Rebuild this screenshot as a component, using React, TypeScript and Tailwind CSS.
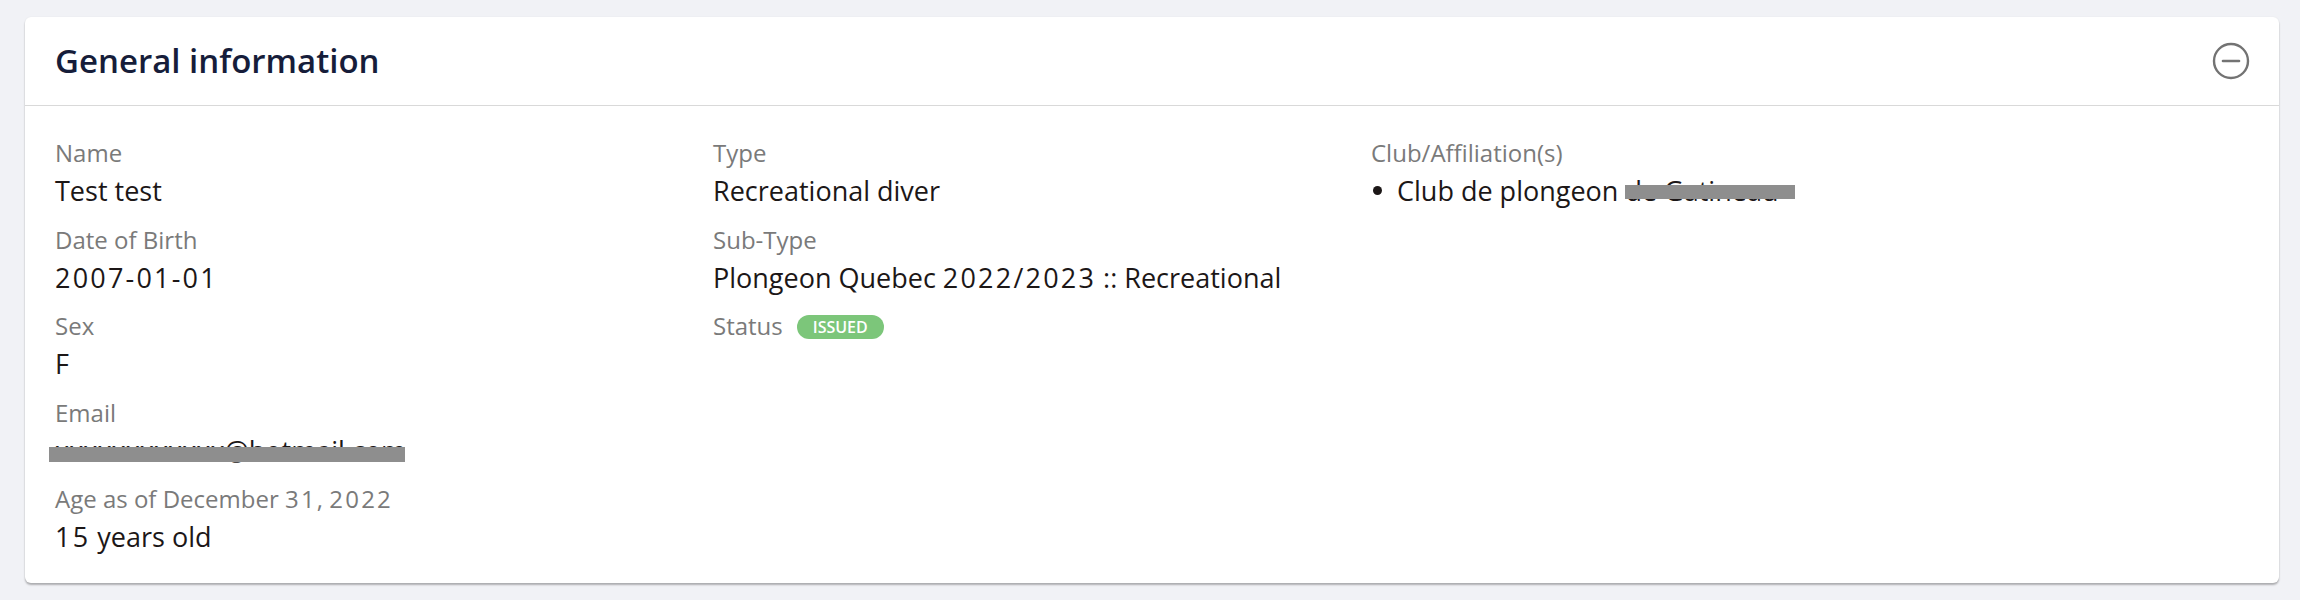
import React from "react";

const FONT = { fontFamily: '"Open Sans", "Noto Sans", sans-serif' };

function D({ children }: { children: React.ReactNode }) {
  return <span className="tracking-[2.2px]">{children}</span>;
}

function Label({ children }: { children: React.ReactNode }) {
  return <div className="text-[24px] leading-[34px] text-[#7a7a7a]">{children}</div>;
}

function Value({ children }: { children: React.ReactNode }) {
  return <div className="text-[27px] leading-[41px] text-[#1c1717]">{children}</div>;
}

function Field({ label, value }: { label: React.ReactNode; value: React.ReactNode }) {
  return (
    <div className="flex flex-col">
      <Label>{label}</Label>
      <Value>{value}</Value>
    </div>
  );
}

export default function App() {
  return (
    <div className="min-h-[600px] w-[2300px] bg-[#f1f2f6] pt-[17px] pl-[25px]" style={FONT}>
      <div className="w-[2254px] rounded-[6px] bg-white shadow-[0_2px_2px_rgba(0,0,0,0.28),0_0_2px_rgba(0,0,0,0.06)]">
        <div className="flex h-[89px] items-center justify-between border-b border-[#d9d9d9] px-[30px]">
          <h2 className="mt-[-2px] text-[33px] font-semibold leading-none text-[#161d3a]">General information</h2>
          <svg width="38" height="38" viewBox="0 0 38 38" fill="none" className="mr-[-1px]">
            <circle cx="19" cy="19" r="17" stroke="#737373" strokeWidth="2.4" />
            <line x1="11" y1="19" x2="27" y2="19" stroke="#737373" strokeWidth="2.6" strokeLinecap="round" />
          </svg>
        </div>
        <div className="grid grid-cols-[658px_658px_1fr] px-[30px] pt-[30px] pb-[26px]">
          <div className="flex flex-col gap-[11.6px]">
            <Field label="Name" value="Test test" />
            <Field label="Date of Birth" value={<D>2007-01-01</D>} />
            <Field label="Sex" value="F" />
            <Field
              label="Email"
              value={
                <span className="relative inline-block">
                  xxxxxxxxxxxx@hotmail.com
                  <span className="absolute left-[-6px] top-[17px] h-[15px] w-[356px] bg-[#8e8e8e]" />
                </span>
              }
            />
            <Field
              label={
                <>
                  Age as of December <D>31</D>, <D>2022</D>
                </>
              }
              value={
                <>
                  <D>15</D> years old
                </>
              }
            />
          </div>
          <div className="flex flex-col gap-[11.6px]">
            <Field label="Type" value="Recreational diver" />
            <Field
              label="Sub-Type"
              value={
                <>
                  Plongeon Quebec <D>2022/2023</D> :: Recreational
                </>
              }
            />
            <div className="flex items-center">
              <Label>Status</Label>
              <span className="ml-[14px] mt-[1px] flex h-[24px] w-[87px] items-center justify-center rounded-full bg-[#7cc67a] text-[16px] font-semibold leading-none text-white">
                ISSUED
              </span>
            </div>
          </div>
          <div className="flex flex-col">
            <Label>Club/Affiliation(s)</Label>
            <div className="flex items-center text-[27px] leading-[41px] text-[#1c1717]">
              <span className="ml-[2px] mr-[15px] h-[9px] w-[9px] rounded-full bg-[#1c1717]" />
              <span>Club de plongeon&nbsp;</span>
              <span className="relative inline-block">
                de Gatineau
                <span className="absolute left-0 top-[15px] h-[14px] w-[170px] bg-[#8e8e8e]" />
              </span>
            </div>
          </div>
        </div>
      </div>
    </div>
  );
}
